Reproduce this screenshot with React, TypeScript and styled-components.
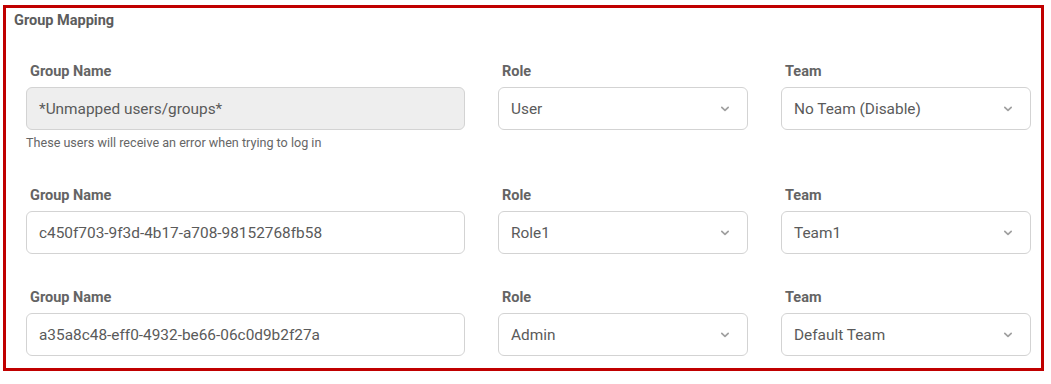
import styled, { createGlobalStyle } from 'styled-components';

const GlobalStyle = createGlobalStyle`
  * {
    box-sizing: border-box;
  }

  body {
    margin: 0;
    background: #ffffff;
    font-family: Roboto, "Liberation Sans", Arial, sans-serif;
  }
`;

const Frame = styled.section`
  width: 1041px;
  height: 366px;
  margin: 5px 0 0 3px;
  padding: 5px 10px 0 8px;

  border: 3px solid #c00000;
  background: #ffffff;
`;

const Title = styled.h2`
  margin: 0;

  font-size: 14.5px;
  line-height: 16px;
  font-weight: 700;
  color: #5c5c5c;
`;

const Rows = styled.div`
  margin-top: 35px;
  padding-left: 12px;

  display: flex;
  flex-direction: column;
  gap: 36px;
`;

const Row = styled.div`
  display: grid;
  grid-template-columns: 439px 250px 250px;
  column-gap: 33px;
  align-items: start;
`;

const Cell = styled.div`
  display: flex;
  flex-direction: column;
`;

const Label = styled.label`
  padding-left: 4px;
  margin-bottom: 7px;

  font-size: 14.5px;
  line-height: 16px;
  font-weight: 700;
  color: #646464;
`;

const Field = styled.div<{ $disabled?: boolean }>`
  height: 43px;
  padding: 0 17px 0 12px;

  display: flex;
  align-items: center;
  justify-content: space-between;

  border: 1px solid #d3d3d3;
  border-radius: 6px;
  background: ${(p) => (p.$disabled ? '#eeeeee' : '#ffffff')};

  font-size: 15.4px;
  color: #5a5a5a;
  white-space: nowrap;
`;

const Helper = styled.div`
  margin-top: 4px;

  font-size: 12.6px;
  line-height: 18px;
  color: #666666;
`;

function Chevron() {
  return (
    <svg width="10" height="6" viewBox="0 0 10 6" fill="none">
      <path
        d="M1.8 1.3 L5 4.4 L8.2 1.3"
        stroke="#a0a0a0"
        strokeWidth="1.7"
        strokeLinecap="round"
        strokeLinejoin="round"
      />
    </svg>
  );
}

interface Mapping {
  group: string;
  role: string;
  team: string;
  unmapped?: boolean;
}

const mappings: Mapping[] = [
  {
    group: '*Unmapped users/groups*',
    role: 'User',
    team: 'No Team (Disable)',
    unmapped: true,
  },
  {
    group: 'c450f703-9f3d-4b17-a708-98152768fb58',
    role: 'Role1',
    team: 'Team1',
  },
  {
    group: 'a35a8c48-eff0-4932-be66-06c0d9b2f27a',
    role: 'Admin',
    team: 'Default Team',
  },
];

function Select({ value }: { value: string }) {
  return (
    <Field>
      <span>{value}</span>
      <Chevron />
    </Field>
  );
}

export default function App() {
  return (
    <>
      <GlobalStyle />
      <Frame>
        <Title>Group Mapping</Title>
        <Rows>
          {mappings.map((m) => (
            <Row key={m.group}>
              <Cell>
                <Label>Group Name</Label>
                <Field $disabled={m.unmapped}>{m.group}</Field>
                {m.unmapped && (
                  <Helper>These users will receive an error when trying to log in</Helper>
                )}
              </Cell>
              <Cell>
                <Label>Role</Label>
                <Select value={m.role} />
              </Cell>
              <Cell>
                <Label>Team</Label>
                <Select value={m.team} />
              </Cell>
            </Row>
          ))}
        </Rows>
      </Frame>
    </>
  );
}
